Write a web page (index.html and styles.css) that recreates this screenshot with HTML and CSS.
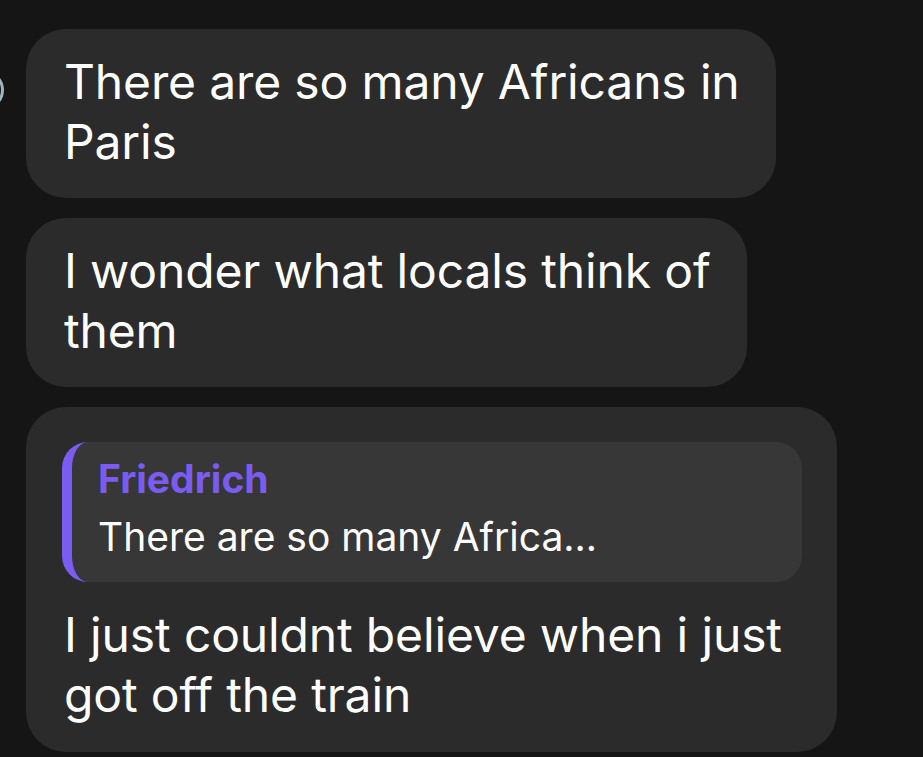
FILE: index.html
```html
<!DOCTYPE html>
<html lang="en">
<head>
<meta charset="utf-8">
<title>Chat</title>
<link rel="stylesheet" href="styles.css">
</head>
<body>
<div class="edge-avatar"></div>
<main class="thread">
  <div class="bubble">There are so many Africans in<br>Paris</div>
  <div class="bubble">I wonder what locals think of<br>them</div>
  <div class="bubble bubble-reply">
    <div class="quote">
      <div class="quote-name">Friedrich</div>
      <div class="quote-text">There are so many Africa...</div>
    </div>
    <div class="reply-text">I just couldnt believe when i just got off the train</div>
  </div>
</main>
</body>
</html>
```
FILE: styles.css
```css
html, body {
  margin: 0;
  padding: 0;
  background: #151515;
  height: 100%;
  overflow: hidden;
}
body {
  font-family: Inter, "Noto Sans", "Liberation Sans", sans-serif;
  color: #ffffff;
  position: relative;
}
.edge-avatar {
  position: absolute;
  left: -28px;
  top: 72px;
  width: 26px;
  height: 30px;
  border-radius: 50%;
  border: 3px solid #9fb4bd;
}
.thread {
  display: flex;
  flex-direction: column;
  align-items: flex-start;
  gap: 20px;
  padding: 29px 0 0 26px;
}
.bubble {
  box-sizing: border-box;
  width: fit-content;
  max-width: 811px;
  background: #2b2b2b;
  border-radius: 40px;
  padding: 23px 36px 26px 38px;
  font-size: 48px;
  line-height: 60px;
  letter-spacing: -0.15px;
}
.bubble-reply {
  padding: 35px 35px 27px 36px;
}
.quote {
  background: #373737;
  border-left: 10px solid #7b5cf2;
  border-radius: 26px;
  padding: 15px 20px 23px 26px;
}
.quote-name {
  color: #7b5cf2;
  font-weight: 700;
  font-size: 39px;
  line-height: 44px;
  margin-bottom: 14px;
  letter-spacing: 0;
}
.quote-text {
  font-size: 39px;
  line-height: 44px;
  letter-spacing: 0;
}
.reply-text {
  padding-left: 2px;
  margin-top: 23px;
}
```
